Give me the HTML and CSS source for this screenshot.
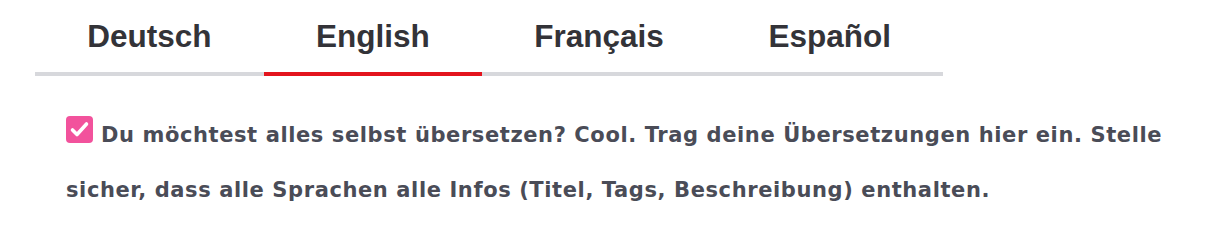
FILE: index.html
```html
<!DOCTYPE html>
<html lang="de">
<head>
<meta charset="utf-8">
<title>Übersetzungen</title>
<link rel="stylesheet" href="styles.css">
</head>
<body>
<nav class="tabs">
  <a class="tab">Deutsch</a>
  <a class="tab active">English</a>
  <a class="tab">Français</a>
  <a class="tab">Español</a>
</nav>
<p class="note"><span class="check"><svg viewBox="0 0 27 27" width="27" height="27"><path d="M6.5 14 L11 18.5 L20.5 8" fill="none" stroke="#fff" stroke-width="3.6" stroke-linecap="round" stroke-linejoin="round"/></svg></span> Du möchtest alles selbst übersetzen? Cool. Trag deine Übersetzungen hier ein. Stelle sicher, dass alle Sprachen alle Infos (Titel, Tags, Beschreibung) enthalten.</p>
</body>
</html>
```
FILE: styles.css
```css
html, body {
  margin: 0;
  padding: 0;
  background: #fff;
}
.tabs {
  display: flex;
  width: fit-content;
  margin-left: 35px;
  border-bottom: 4px solid #d7d8dc;
}
.tab {
  font-family: "Liberation Sans", Arial, sans-serif;
  font-weight: bold;
  font-size: 31.5px;
  line-height: 36px;
  color: #333338;
  padding: 18px 52.25px 18px;
  margin-bottom: -4px;
  border-bottom: 4px solid transparent;
}
.tab.active {
  border-bottom-color: #e3141d;
}
.note {
  margin: 32px 0 0 66px;
  width: 1120px;
  font-family: "DejaVu Sans", sans-serif;
  font-weight: bold;
  font-size: 21px;
  letter-spacing: 0.6px;
  line-height: 55px;
  color: #4a4c57;
}
.check {
  display: inline-block;
  width: 27px;
  height: 27px;
  border-radius: 4px;
  background: #f2529c;
  vertical-align: -1px;
}
.check svg {
  display: block;
}
```
